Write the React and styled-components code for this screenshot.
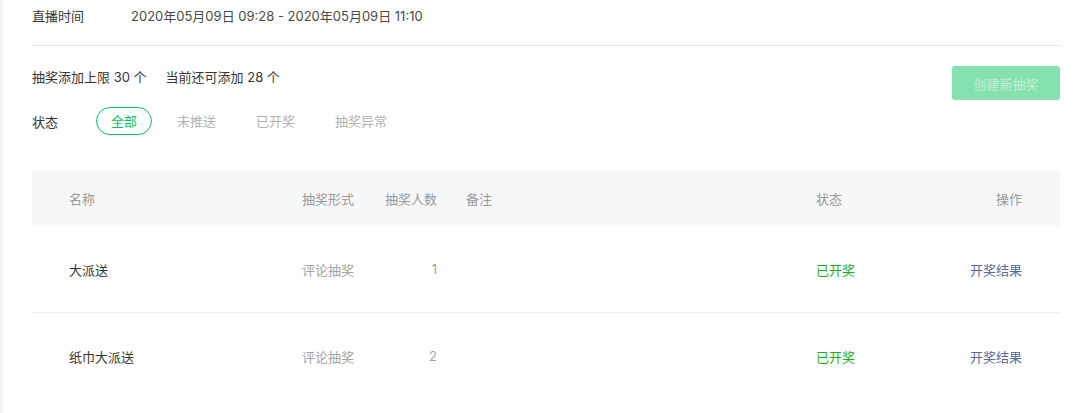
import React from "react";
import styled, { createGlobalStyle } from "styled-components";

const GlobalStyle = createGlobalStyle`
  html, body {
    margin: 0;
    padding: 0;
    background: #fff;
  }
  body {
    font-family: Inter, "Noto Sans CJK SC", sans-serif;
    font-size: 13px;
    color: #353535;
  }
`;

const Page = styled.div`
  border-left: 3px solid #f4f5f7;
  padding: 0 20px 0 29px;
  min-height: 413px;
  box-sizing: border-box;
`;

const InfoRow = styled.div`
  display: flex;
  align-items: center;
  padding: 6px 0 19px;
  line-height: 20px;
  border-bottom: 1px solid #e7e7e7;
`;

const InfoLabel = styled.span`
  width: 99px;
  color: #353535;
`;

const InfoValue = styled.span`
  color: #4a4a4a;
`;

const Toolbar = styled.div`
  display: flex;
  justify-content: space-between;
  align-items: flex-start;
  padding-top: 20px;
`;

const Filters = styled.div`
  display: flex;
  flex-direction: column;
`;

const Quota = styled.div`
  margin-top: 1px;
  line-height: 20px;
  display: flex;
  gap: 19px;
  color: #353535;
`;

const StatusRow = styled.div`
  display: flex;
  align-items: center;
  margin-top: 20px;
`;

const StatusLabel = styled.span`
  width: 64px;
  color: #353535;
`;

const Tabs = styled.div`
  display: flex;
  gap: 10px;
`;

const Tab = styled.span`
  height: 28px;
  line-height: 26px;
  padding: 0 14px;
  box-sizing: border-box;
  border-radius: 14px;
  border: 1px solid ${(p) => (p.$active ? "#07c160" : "transparent")};
  color: ${(p) => (p.$active ? "#07c160" : "#b2b2b2")};
`;

const CreateButton = styled.button`
  width: 108px;
  height: 34px;
  border: none;
  border-radius: 3px;
  background: #86e1b1;
  color: #c3eed7;
  font-family: inherit;
  font-size: 13px;
`;

const Table = styled.div`
  margin-top: 35px;
`;

const Row = styled.div`
  display: grid;
  grid-template-columns: 233px 83px 81px 1fr 153px 53px;
  align-items: center;
  padding: 0 38px 0 37px;
  height: ${(p) => (p.$head ? "56px" : "86px")};
  background: ${(p) => (p.$head ? "#f6f7f9" : "#fff")};
  color: ${(p) => (p.$head ? "#9a9a9a" : "#353535")};
  border-bottom: ${(p) => (p.$divider ? "1px solid #eeeeee" : "none")};
`;

const Cell = styled.span`
  white-space: nowrap;
  text-align: ${(p) => (p.$right ? "right" : "left")};
  padding-right: ${(p) => (p.$count ? "29px" : "0")};
  color: ${(p) => p.$color || "inherit"};
`;

const rows = [
  { name: "大派送", type: "评论抽奖", count: 1 },
  { name: "纸巾大派送", type: "评论抽奖", count: 2 },
];

export default function App() {
  return (
    <>
      <GlobalStyle />
      <Page>
        <InfoRow>
          <InfoLabel>直播时间</InfoLabel>
          <InfoValue>2020年05月09日 09:28 - 2020年05月09日 11:10</InfoValue>
        </InfoRow>
        <Toolbar>
          <Filters>
            <Quota>
              <span>抽奖添加上限 30 个</span>
              <span>当前还可添加 28 个</span>
            </Quota>
            <StatusRow>
              <StatusLabel>状态</StatusLabel>
              <Tabs>
                <Tab $active>全部</Tab>
                <Tab>未推送</Tab>
                <Tab>已开奖</Tab>
                <Tab>抽奖异常</Tab>
              </Tabs>
            </StatusRow>
          </Filters>
          <CreateButton disabled>创建新抽奖</CreateButton>
        </Toolbar>
        <Table>
          <Row $head>
            <Cell>名称</Cell>
            <Cell>抽奖形式</Cell>
            <Cell $right $count>抽奖人数</Cell>
            <Cell>备注</Cell>
            <Cell>状态</Cell>
            <Cell $right>操作</Cell>
          </Row>
          {rows.map((r, i) => (
            <Row key={r.name} $divider={i < rows.length - 1}>
              <Cell>{r.name}</Cell>
              <Cell $color="#a3a3a3">{r.type}</Cell>
              <Cell $right $count $color="#a3a3a3">{r.count}</Cell>
              <Cell></Cell>
              <Cell $color="#1aad19">已开奖</Cell>
              <Cell $right $color="#576b95">开奖结果</Cell>
            </Row>
          ))}
        </Table>
      </Page>
    </>
  );
}
